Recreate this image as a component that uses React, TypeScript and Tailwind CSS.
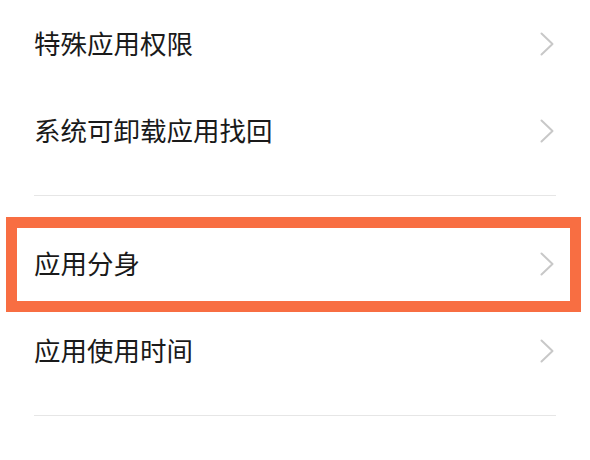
import React from "react";

type Item = { id: string; label: string; highlight?: boolean };

const groups: Item[][] = [
  [
    { id: "special", label: "特殊应用权限" },
    { id: "restore", label: "系统可卸载应用找回" },
  ],
  [
    { id: "clone", label: "应用分身", highlight: true },
    { id: "usage", label: "应用使用时间" },
  ],
];

function Chevron() {
  return (
    <svg width="14" height="24" viewBox="0 0 14 24" fill="none">
      <polyline
        points="1.5,1.5 12.5,12 1.5,22.5"
        stroke="#c8c8c8"
        strokeWidth="2"
        strokeLinecap="round"
        strokeLinejoin="round"
      />
    </svg>
  );
}

function Row({ item }: { item: Item }) {
  return (
    <div className="relative flex h-[87px] items-center justify-between pl-[34px] pr-[36px]">
      <span className="text-[26.5px] leading-none text-[#1a1a1a]">{item.label}</span>
      <Chevron />
      {item.highlight && (
        <div className="pointer-events-none absolute left-[6px] right-[9px] top-[-3px] bottom-[-5px] border-[11px] border-[#f86e42]" />
      )}
    </div>
  );
}

export default function App(): React.ReactElement {
  return (
    <div
      className="h-[460px] w-[590px] overflow-hidden bg-white"
      style={{ fontFamily: '"Noto Sans CJK SC", "Noto Sans", sans-serif' }}
    >
      {groups.map((group, i) => (
        <div key={i} className={i === 0 ? "" : "pt-[24px]"}>
          <div className="pb-[21px]">
            {group.map((item) => (
              <Row key={item.id} item={item} />
            ))}
          </div>
          <div className="mx-[34px] h-px bg-[#e6e6e6]" />
        </div>
      ))}
    </div>
  );
}
